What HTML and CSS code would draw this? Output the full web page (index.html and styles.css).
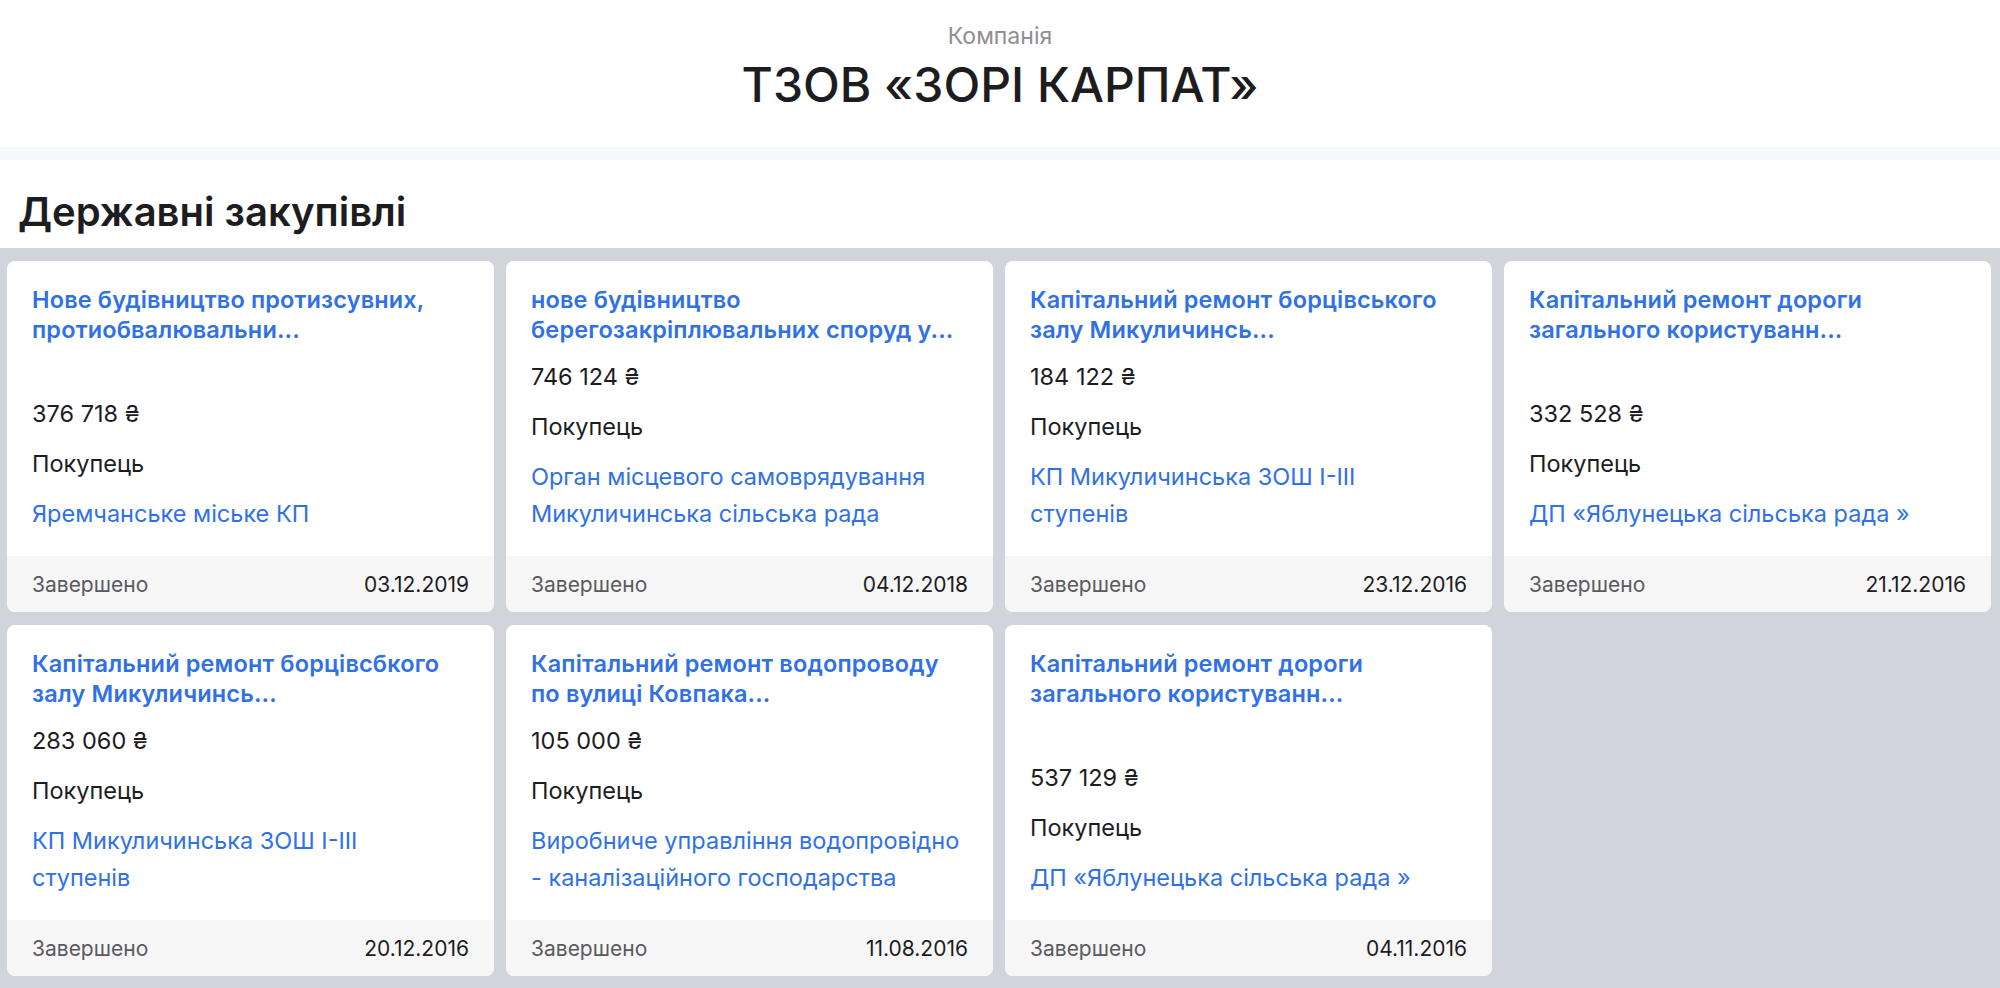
FILE: index.html
```html
<!DOCTYPE html>
<html lang="uk">
<head>
<meta charset="utf-8">
<title>ТЗОВ «ЗОРІ КАРПАТ»</title>
<link rel="stylesheet" href="styles.css">
</head>
<body>
<header class="company">
  <div class="company-label">Компанія</div>
  <h1 class="company-name">ТЗОВ «ЗОРІ КАРПАТ»</h1>
</header>
<div class="band"></div>
<section class="tenders">
  <h2 class="tenders-title">Державні закупівлі</h2>
  <div class="grid">
    <article class="card">
      <div class="card-body">
        <a class="card-title">Нове будівництво протизсувних,<br>протиобвалювальни...</a>
        <div class="card-info">
          <div class="price">376 718 ₴</div>
          <div class="label">Покупець</div>
          <a class="buyer">Яремчанське міське КП</a>
        </div>
      </div>
      <div class="card-foot"><span class="status">Завершено</span><span class="date">03.12.2019</span></div>
    </article>
    <article class="card">
      <div class="card-body">
        <a class="card-title">нове будівництво<br>берегозакріплювальних споруд у...</a>
        <div class="card-info">
          <div class="price">746 124 ₴</div>
          <div class="label">Покупець</div>
          <a class="buyer">Орган місцевого самоврядування<br>Микуличинська сільська рада</a>
        </div>
      </div>
      <div class="card-foot"><span class="status">Завершено</span><span class="date">04.12.2018</span></div>
    </article>
    <article class="card">
      <div class="card-body">
        <a class="card-title">Капітальний ремонт борцівського<br>залу Микуличинсь...</a>
        <div class="card-info">
          <div class="price">184 122 ₴</div>
          <div class="label">Покупець</div>
          <a class="buyer">КП Микуличинська ЗОШ І-ІІІ<br>ступенів</a>
        </div>
      </div>
      <div class="card-foot"><span class="status">Завершено</span><span class="date">23.12.2016</span></div>
    </article>
    <article class="card">
      <div class="card-body">
        <a class="card-title">Капітальний ремонт дороги<br>загального користуванн...</a>
        <div class="card-info">
          <div class="price">332 528 ₴</div>
          <div class="label">Покупець</div>
          <a class="buyer">ДП «Яблунецька сільська рада »</a>
        </div>
      </div>
      <div class="card-foot"><span class="status">Завершено</span><span class="date">21.12.2016</span></div>
    </article>
    <article class="card">
      <div class="card-body">
        <a class="card-title">Капітальний ремонт борцівсбкого<br>залу Микуличинсь...</a>
        <div class="card-info">
          <div class="price">283 060 ₴</div>
          <div class="label">Покупець</div>
          <a class="buyer">КП Микуличинська ЗОШ І-ІІІ<br>ступенів</a>
        </div>
      </div>
      <div class="card-foot"><span class="status">Завершено</span><span class="date">20.12.2016</span></div>
    </article>
    <article class="card">
      <div class="card-body">
        <a class="card-title">Капітальний ремонт водопроводу<br>по вулиці Ковпака...</a>
        <div class="card-info">
          <div class="price">105 000 ₴</div>
          <div class="label">Покупець</div>
          <a class="buyer">Виробниче управління водопровідно<br>- каналізаційного господарства</a>
        </div>
      </div>
      <div class="card-foot"><span class="status">Завершено</span><span class="date">11.08.2016</span></div>
    </article>
    <article class="card">
      <div class="card-body">
        <a class="card-title">Капітальний ремонт дороги<br>загального користуванн...</a>
        <div class="card-info">
          <div class="price">537 129 ₴</div>
          <div class="label">Покупець</div>
          <a class="buyer">ДП «Яблунецька сільська рада »</a>
        </div>
      </div>
      <div class="card-foot"><span class="status">Завершено</span><span class="date">04.11.2016</span></div>
    </article>
  </div>
</section>
</body>
</html>
```

FILE: styles.css
```css
* { box-sizing: border-box; }
html, body { margin: 0; padding: 0; }
body {
  font-family: Inter, "Noto Sans", "Liberation Sans", sans-serif;
  color: #1d1d1f;
  background: #d1d5db;
}
.company {
  background: #fff;
  text-align: center;
  padding: 22px 0 33px;
}
.company-label {
  font-size: 23px;
  line-height: 28px;
  color: #8e8e93;
}
.company-name {
  margin: 5px 0 0;
  font-size: 48px;
  line-height: 59px;
  font-weight: 500;
  color: #1d1d1f;
}
.band {
  height: 13px;
  background: #f7f8fa;
}
.tenders { background: #d1d5db; }
.tenders-title {
  margin: 0;
  background: #fff;
  padding: 28px 18px 12px;
  font-size: 40px;
  line-height: 48px;
  font-weight: 600;
  color: #1d1d1f;
}
.grid {
  display: grid;
  grid-template-columns: repeat(4, 1fr);
  grid-auto-rows: 351px;
  gap: 13px 12px;
  padding: 13px 9px 11px 7px;
}
.card {
  background: #fff;
  border-radius: 8px;
  overflow: hidden;
  display: flex;
  flex-direction: column;
}
.card-body {
  flex: 1;
  display: flex;
  flex-direction: column;
  justify-content: space-between;
  padding: 24px 25px;
}
.card-title {
  display: block;
  font-size: 23.5px;
  line-height: 30px;
  letter-spacing: 0.15px;
  font-weight: 600;
  color: #3071e6;
}
.card-info {
  font-size: 23.5px;
  line-height: 37px;
}
.price, .label { margin-bottom: 13px; color: #1d1d1f; }
.buyer { display: block; color: #3071e6; }
.card-foot {
  height: 56px;
  background: #f6f6f7;
  display: flex;
  align-items: center;
  justify-content: space-between;
  padding: 0 25px;
  font-size: 21px;
}
.status { color: #5a5a5e; }
.date { color: #1d1d1f; }
```
